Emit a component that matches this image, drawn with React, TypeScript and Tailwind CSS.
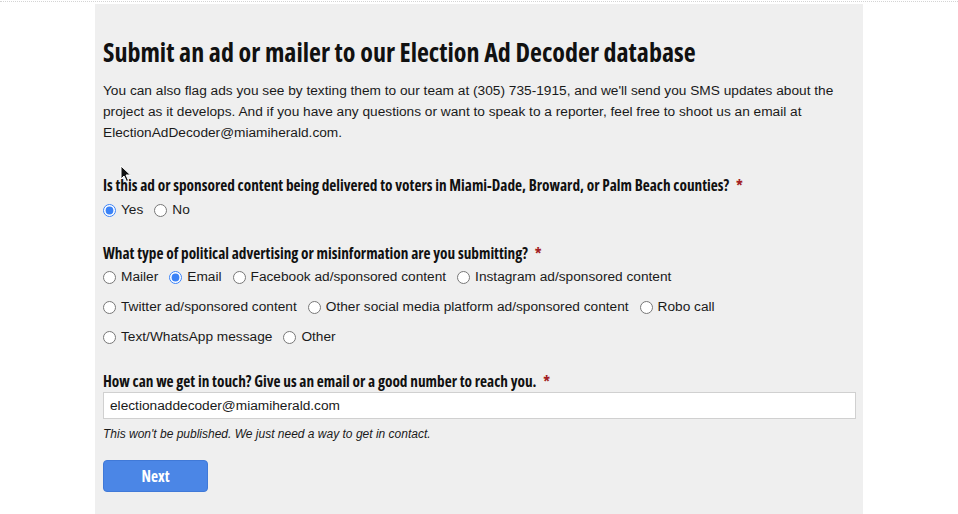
import React, { useState } from "react";

const heading = "font-['Open_Sans','DejaVu_Sans_Condensed',sans-serif] font-bold font-stretch-condensed";
const body = "font-['Liberation_Sans',Arial,sans-serif]";

const types = [
  ["Mailer", "Email", "Facebook ad/sponsored content", "Instagram ad/sponsored content"],
  ["Twitter ad/sponsored content", "Other social media platform ad/sponsored content", "Robo call"],
  ["Text/WhatsApp message", "Other"],
];

const Radio = ({ name, label, checked, onChange }: { name: string; label: string; checked: boolean; onChange: () => void }) => (
  <label className="flex items-center gap-[5px] h-5">
    <input type="radio" name={name} checked={checked} onChange={onChange} className="m-0 w-[13px] h-[13px] accent-[#3b82f6]" />
    <span>{label}</span>
  </label>
);

const Label = ({ children }: { children: React.ReactNode }) => (
  <div className={`${heading} text-[15.3px] leading-5 text-[#111]`}>
    {children} <span className="ml-1 text-[#a31f24]">*</span>
  </div>
);

export default function App() {
  const [local, setLocal] = useState("Yes");
  const [kind, setKind] = useState("Email");
  const [contact, setContact] = useState("electionaddecoder@miamiherald.com");

  return (
    <div className="w-[958px] h-[514px] bg-white overflow-hidden">
      <div className="h-[3px] border-t border-dotted border-[#d4d4d4] mt-px" />
      <div className="relative mx-[95px] w-[768px] h-[511px] bg-[#efefef] pl-2 pr-[7px] pt-[30px] text-[#1a1a1a]">
        <h1 className={`${heading} text-[26px] leading-9 text-[#111]`}>
          Submit an ad or mailer to our Election Ad Decoder database
        </h1>
        <p className={`${body} mt-[10px] text-[13.7px] leading-[21px]`}>
          You can also flag ads you see by texting them to our team at (305) 735-1915, and we'll send you SMS updates about the
          project as it develops. And if you have any questions or want to speak to a reporter, feel free to shoot us an email at
          ElectionAdDecoder@miamiherald.com.
        </p>

        <div className="mt-[32px]">
          <Label>Is this ad or sponsored content being delivered to voters in Miami-Dade, Broward, or Palm Beach counties?</Label>
        </div>
        <div className={`${body} mt-[5px] flex gap-[11px] text-[13.7px]`}>
          {["Yes", "No"].map((o) => (
            <Radio key={o} name="local" label={o} checked={local === o} onChange={() => setLocal(o)} />
          ))}
        </div>

        <div className="mt-[23px]">
          <Label>What type of political advertising or misinformation are you submitting?</Label>
        </div>
        <div className={`${body} mt-[4px] flex flex-col gap-[10px] text-[13.7px]`}>
          {types.map((row, i) => (
            <div key={i} className="flex gap-[11px]">
              {row.map((o) => (
                <Radio key={o} name="kind" label={o} checked={kind === o} onChange={() => setKind(o)} />
              ))}
            </div>
          ))}
        </div>

        <div className="mt-[24px]">
          <Label>How can we get in touch? Give us an email or a good number to reach you.</Label>
        </div>
        <input
          value={contact}
          onChange={(e) => setContact(e.target.value)}
          className={`${body} mt-px block w-full h-[27px] bg-white border border-[#d0d0d0] px-[6px] text-[13.7px] text-[#1a1a1a] outline-none`}
        />
        <p className={`${body} mt-[7px] text-[12px] leading-4 italic text-[#1a1a1a]`}>
          This won't be published. We just need a way to get in contact.
        </p>

        <button
          type="button"
          className={`${heading} mt-[18px] w-[105px] h-[32px] rounded-[4px] bg-[#4b86e6] border border-[#4079d8] text-white text-[15.3px]`}
        >
          Next
        </button>

        {/* mouse pointer */}
        <svg className="absolute left-[25px] top-[161px]" width="12" height="18" viewBox="0 0 12 18">
          <path d="M1 1 L1 14 L4 11 L6.5 16.5 L8.5 15.5 L6 10 L10.5 10 Z" fill="#111" stroke="#fff" strokeWidth="1" />
        </svg>
      </div>
    </div>
  );
}
